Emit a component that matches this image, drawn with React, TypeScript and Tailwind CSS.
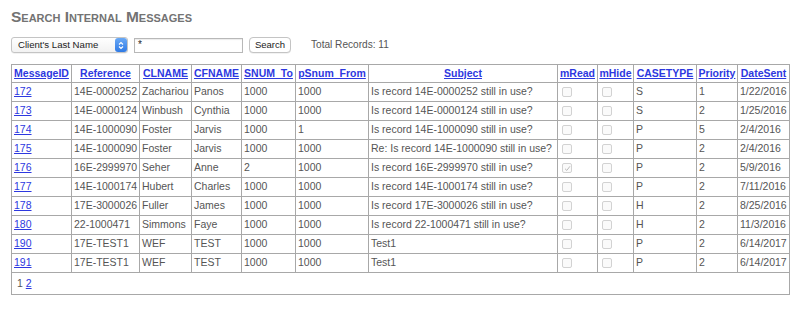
import React from "react";

type Row = {
  id: string;
  ref: string;
  cl: string;
  cf: string;
  to: string;
  from: string;
  subj: string;
  read: boolean;
  ct: string;
  pr: string;
  date: string;
};

const rows: Row[] = [
  { id: "172", ref: "14E-0000252", cl: "Zachariou", cf: "Panos", to: "1000", from: "1000", subj: "Is record 14E-0000252 still in use?", read: false, ct: "S", pr: "1", date: "1/22/2016" },
  { id: "173", ref: "14E-0000124", cl: "Winbush", cf: "Cynthia", to: "1000", from: "1000", subj: "Is record 14E-0000124 still in use?", read: false, ct: "S", pr: "2", date: "1/25/2016" },
  { id: "174", ref: "14E-1000090", cl: "Foster", cf: "Jarvis", to: "1000", from: "1", subj: "Is record 14E-1000090 still in use?", read: false, ct: "P", pr: "5", date: "2/4/2016" },
  { id: "175", ref: "14E-1000090", cl: "Foster", cf: "Jarvis", to: "1000", from: "1000", subj: "Re: Is record 14E-1000090 still in use?", read: false, ct: "P", pr: "2", date: "2/4/2016" },
  { id: "176", ref: "16E-2999970", cl: "Seher", cf: "Anne", to: "2", from: "1000", subj: "Is record 16E-2999970 still in use?", read: true, ct: "P", pr: "2", date: "5/9/2016" },
  { id: "177", ref: "14E-1000174", cl: "Hubert", cf: "Charles", to: "1000", from: "1000", subj: "Is record 14E-1000174 still in use?", read: false, ct: "P", pr: "2", date: "7/11/2016" },
  { id: "178", ref: "17E-3000026", cl: "Fuller", cf: "James", to: "1000", from: "1000", subj: "Is record 17E-3000026 still in use?", read: false, ct: "H", pr: "2", date: "8/25/2016" },
  { id: "180", ref: "22-1000471", cl: "Simmons", cf: "Faye", to: "1000", from: "1000", subj: "Is record 22-1000471 still in use?", read: false, ct: "H", pr: "2", date: "11/3/2016" },
  { id: "190", ref: "17E-TEST1", cl: "WEF", cf: "TEST", to: "1000", from: "1000", subj: "Test1", read: false, ct: "P", pr: "2", date: "6/14/2017" },
  { id: "191", ref: "17E-TEST1", cl: "WEF", cf: "TEST", to: "1000", from: "1000", subj: "Test1", read: false, ct: "P", pr: "2", date: "6/14/2017" },
];

const headers = [
  "MessageID",
  "Reference",
  "CLNAME",
  "CFNAME",
  "SNUM_To",
  "pSnum_From",
  "Subject",
  "mRead",
  "mHide",
  "CASETYPE",
  "Priority",
  "DateSent",
];

const widths = [60, 68, 52, 50, 54, 73, 189, 40, 36, 63, 41, 52];

function Box({ checked }: { checked: boolean }) {
  return (
    <div className="ml-[2px] w-[10px] h-[10px] rounded-[2px] border border-[#d2d2d2] bg-[#fafafa] flex items-center justify-center">
      {checked && (
        <svg width="7" height="7" viewBox="0 0 8 8">
          <path d="M1.2 4.3 L3.2 6.2 L6.8 1.5" fill="none" stroke="#b0b0b0" strokeWidth="1" />
        </svg>
      )}
    </div>
  );
}

const td = "border border-[#a8a8a8] pl-[2px] pr-[1px] h-[19px] align-middle whitespace-nowrap overflow-hidden";

export default function App() {
  return (
    <div
      className="bg-white w-[800px] h-[309px] pl-[10px] pt-[7px] text-[#555]"
      style={{ fontFamily: '"Liberation Sans", Arial, sans-serif' }}
    >
      <div className="text-[15.5px] font-bold text-[#737373] [font-variant:small-caps] leading-[20px] ml-[1px]">
        Search Internal Messages
      </div>
      <div className="flex items-center mt-[10px] ml-[1px] h-[16px]">
        <div className="relative w-[117px] h-[16px] rounded-[3px] border border-[#c4c4c4] bg-gradient-to-b from-white to-[#f2f2f2] flex items-center shadow-[0_0.5px_0.5px_rgba(0,0,0,0.1)]">
          <span className="text-[9.6px] text-[#222] pl-[6px] leading-none">Client's Last Name</span>
          <div className="absolute right-[0px] top-[0px] w-[12px] h-[14px] rounded-[3px] bg-gradient-to-b from-[#6aa9f5] to-[#2f7ae5] flex items-center justify-center">
            <svg width="6" height="9" viewBox="0 0 6 9">
              <path d="M1 3.5 L3 1.5 L5 3.5" fill="none" stroke="white" strokeWidth="1.1" />
              <path d="M1 5.5 L3 7.5 L5 5.5" fill="none" stroke="white" strokeWidth="1.1" />
            </svg>
          </div>
        </div>
        <div className="ml-[6px] w-[109px] h-[15px] border border-[#b8b8b8] bg-white flex items-center shadow-[inset_0_1px_1px_rgba(0,0,0,0.08)]">
          <span className="text-[10px] text-[#222] pl-[3px] leading-none">*</span>
        </div>
        <div className="ml-[6px] w-[42px] h-[16px] rounded-[4px] border border-[#c4c4c4] bg-white flex items-center justify-center shadow-[0_0.5px_0.5px_rgba(0,0,0,0.1)]">
          <span className="text-[9.5px] text-[#222] leading-none">Search</span>
        </div>
        <span className="ml-[20px] text-[10.1px] text-[#555]">Total Records: 11</span>
      </div>
      <table className="mt-[11px] ml-[1px] border-collapse table-fixed w-[778px] text-[10.5px] border border-[#a8a8a8]">
        <colgroup>
          {widths.map((w, i) => (
            <col key={i} style={{ width: w }} />
          ))}
        </colgroup>
        <thead>
          <tr>
            {headers.map((h) => (
              <th key={h} className="border border-[#a8a8a8] px-[1px] h-[18px] font-bold text-center align-middle whitespace-nowrap overflow-hidden">
                <a className="text-[#2d38e0] underline">{h}</a>
              </th>
            ))}
          </tr>
        </thead>
        <tbody>
          {rows.map((r) => (
            <tr key={r.id}>
              <td className={td}>
                <a className="text-[#2d38e0] underline">{r.id}</a>
              </td>
              <td className={td}>{r.ref}</td>
              <td className={td}>{r.cl}</td>
              <td className={td}>{r.cf}</td>
              <td className={td}>{r.to}</td>
              <td className={td}>{r.from}</td>
              <td className={td}>{r.subj}</td>
              <td className={td}>
                <Box checked={r.read} />
              </td>
              <td className={td}>
                <Box checked={false} />
              </td>
              <td className={td}>{r.ct}</td>
              <td className={td}>{r.pr}</td>
              <td className={td}>{r.date}</td>
            </tr>
          ))}
          <tr>
            <td colSpan={12} className="border border-[#a8a8a8] pl-[5px] h-[22px] align-middle">
              <span>1</span> <a className="text-[#2d38e0] underline">2</a>
            </td>
          </tr>
        </tbody>
      </table>
    </div>
  );
}
